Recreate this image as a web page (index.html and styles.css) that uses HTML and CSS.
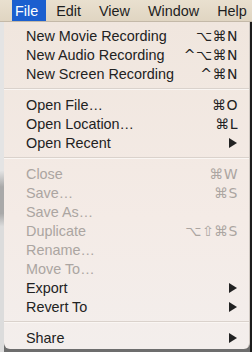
FILE: index.html
```html
<!DOCTYPE html>
<html lang="en">
<head>
    <meta charset="UTF-8">
    <meta name="viewport" content="width=device-width, initial-scale=1.0">
    <title>File Menu</title>
    <link rel="stylesheet" href="styles.css">
</head>
<body>
    <div class="menubar">
        <span class="menu-title active">File</span>
        <span class="menu-title">Edit</span>
        <span class="menu-title">View</span>
        <span class="menu-title">Window</span>
        <span class="menu-title">Help</span>
    </div>

    <div class="stage">
        <div class="gutter-left"></div>
        <div class="menu">
            <div class="item"><span>New Movie Recording</span><span class="key">⌥⌘N</span></div>
            <div class="item"><span>New Audio Recording</span><span class="key">^⌥⌘N</span></div>
            <div class="item"><span>New Screen Recording</span><span class="key">^⌘N</span></div>
            <div class="sep"></div>
            <div class="item"><span>Open File…</span><span class="key">⌘O</span></div>
            <div class="item"><span>Open Location…</span><span class="key">⌘L</span></div>
            <div class="item"><span>Open Recent</span><svg class="arrow" width="8" height="10" viewBox="0 0 8 10"><polygon points="0,0 8,5 0,10"/></svg></div>
            <div class="sep"></div>
            <div class="item disabled"><span>Close</span><span class="key">⌘W</span></div>
            <div class="item disabled"><span>Save…</span><span class="key">⌘S</span></div>
            <div class="item disabled"><span>Save As…</span></div>
            <div class="item disabled"><span>Duplicate</span><span class="key">⌥⇧⌘S</span></div>
            <div class="item disabled"><span>Rename…</span></div>
            <div class="item disabled"><span>Move To…</span></div>
            <div class="item"><span>Export</span><svg class="arrow" width="8" height="10" viewBox="0 0 8 10"><polygon points="0,0 8,5 0,10"/></svg></div>
            <div class="item"><span>Revert To</span><svg class="arrow" width="8" height="10" viewBox="0 0 8 10"><polygon points="0,0 8,5 0,10"/></svg></div>
            <div class="sep"></div>
            <div class="item"><span>Share</span><svg class="arrow" width="8" height="10" viewBox="0 0 8 10"><polygon points="0,0 8,5 0,10"/></svg></div>
        </div>
        <div class="gutter-right"></div>
    </div>
</body>
</html>
```

FILE: styles.css
```css
body {
    margin: 0;
    width: 252px;
    height: 352px;
    overflow: hidden;
    font-family: "Liberation Sans", Arial, sans-serif;
    background-color: #6d6d6d;
    display: flex;
    flex-direction: column;
}
.menubar {
    height: 21px;
    display: flex;
    align-items: stretch;
    padding-left: 12px;
    background: linear-gradient(#e9e0cf, #e0d5c2);
    border-bottom: 1px solid #c4b9a8;
    font-size: 14.4px;
    color: #1e1e1e;
    white-space: nowrap;
}
.menu-title {
    display: flex;
    align-items: center;
    padding: 0 9px;
}
.menu-title.active {
    background-color: #1b5fcf;
    color: white;
    padding: 0 8px 0 3px;
    margin-right: 1px;
}
.stage {
    flex: 1;
    display: flex;
}
.gutter-left {
    width: 4px;
    background: linear-gradient(#e4e4e4 0, #e4e4e4 45%, #a9a9a9 50%, #a9a9a9 58%, #dcdcdc 62%, #dcdcdc 100%);
}
.gutter-right {
    width: 2px;
    background-color: #1c1c1c;
}
.menu {
    flex: 1;
    height: 327px;
    padding-top: 4px;
    box-sizing: border-box;
    background: linear-gradient(#f0e6de, #f4ebe6 60%, #f3eeec);
    border-radius: 0 0 6px 6px;
    border-right: 1px solid #cfc8c2;
    font-size: 14.4px;
    color: #222;
}
.item {
    height: 19px;
    display: flex;
    align-items: center;
    justify-content: space-between;
    padding: 0 11px 0 22px;
    white-space: nowrap;
}
.item.disabled {
    color: #aba5a1;
}
.key {
    font-family: "DejaVu Sans", "Liberation Sans", sans-serif;
    font-size: 14px;
    letter-spacing: 0.5px;
}
.arrow {
    fill: #222;
    margin-right: 1px;
}
.sep {
    height: 12px;
    display: flex;
    align-items: center;
}
.sep::before {
    content: "";
    flex: 1;
    height: 1px;
    background-color: #dad2cc;
    border-bottom: 1px solid #faf6f3;
}
```
